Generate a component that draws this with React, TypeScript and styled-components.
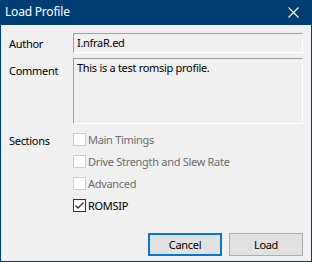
import React from "react";
import styled, { createGlobalStyle } from "styled-components";

const Global = createGlobalStyle`
  html, body { margin: 0; padding: 0; background: #f0f0f0; }
  body { font-family: "Noto Sans", "Open Sans", sans-serif; font-size: 11px; letter-spacing: -0.3px; }
`;

const Window = styled.div`
  width: 312px;
  height: 262px;
  box-sizing: border-box;
  border: 1px solid #003e73;
  border-top: none;
  display: flex;
  flex-direction: column;
  background: #f0f0f0;
`;

const TitleBar = styled.div`
  height: 25px;
  margin: 0 -1px;
  background: #003e73;
  color: #ffffff;
  display: flex;
  align-items: center;
  justify-content: space-between;
  padding: 0 0 0 5px;
  font-size: 12px;
  letter-spacing: -0.2px;
`;

const Title = styled.span`
  line-height: 16px;
  margin-top: -1px;
`;

const CloseBtn = styled.div`
  width: 46px;
  height: 25px;
  display: flex;
  align-items: center;
  justify-content: center;
  padding-left: 8px;
  box-sizing: border-box;
`;

const Body = styled.div`
  flex: 1;
  padding: 8px 8px 5px 8px;
  display: grid;
  grid-template-columns: 64px 1fr;
  grid-template-rows: 20px 66px auto 1fr;
  row-gap: 5px;
  color: #000;
`;

const Label = styled.div<{ $top?: number }>`
  padding-top: ${(p) => p.$top ?? 4}px;
  line-height: 14px;
`;

const Field = styled.div`
  box-sizing: border-box;
  border: 1px solid;
  border-color: #a0a0a0 #ffffff #ffffff #a0a0a0;
  background: #f0f0f0;
  padding: 2px 3px;
  line-height: 14px;
`;

const Checks = styled.div`
  display: flex;
  flex-direction: column;
  gap: 9px;
  padding-top: 4px;
`;

const CheckRow = styled.label<{ $disabled?: boolean }>`
  display: flex;
  align-items: center;
  gap: 2px;
  height: 13px;
  color: ${(p) => (p.$disabled ? "#6d6d6d" : "#000")};
  line-height: 13px;
`;

const Box = styled.span<{ $disabled?: boolean }>`
  width: 13px;
  height: 13px;
  box-sizing: border-box;
  border: 1px solid ${(p) => (p.$disabled ? "#cccccc" : "#333333")};
  background: #ffffff;
  display: flex;
  align-items: center;
  justify-content: center;
  flex: none;
`;

const Buttons = styled.div`
  grid-column: 1 / span 2;
  align-self: end;
  display: flex;
  justify-content: flex-end;
  gap: 7px;
`;

const Button = styled.div<{ $focused?: boolean }>`
  width: 74px;
  height: 23px;
  box-sizing: border-box;
  border: ${(p) => (p.$focused ? "2px solid #0078d7" : "1px solid #adadad")};
  background: #e1e1e1;
  display: flex;
  align-items: center;
  justify-content: center;
  line-height: 14px;
`;

const Check = ({ label, checked, disabled }: { label: string; checked?: boolean; disabled?: boolean }) => (
  <CheckRow $disabled={disabled}>
    <Box $disabled={disabled}>
      {checked && (
        <svg width="11" height="11" viewBox="0 0 11 11">
          <path d="M1.5 5.5 L4 8 L9.5 2.5" stroke="#333" strokeWidth="1.3" fill="none" />
        </svg>
      )}
    </Box>
    <span>{label}</span>
  </CheckRow>
);

export default function App() {
  return (
    <>
      <Global />
      <Window>
        <TitleBar>
          <Title>Load Profile</Title>
          <CloseBtn>
            <svg width="11" height="11" viewBox="0 0 11 11">
              <path d="M0.5 0.5 L10.5 10.5 M10.5 0.5 L0.5 10.5" stroke="#fff" strokeWidth="1.1" />
            </svg>
          </CloseBtn>
        </TitleBar>
        <Body>
          <Label>Author</Label>
          <Field>I.nfraR.ed</Field>
          <Label $top={6}>Comment</Label>
          <Field>This is a test romsip profile.</Field>
          <Label $top={5}>Sections</Label>
          <Checks>
            <Check label="Main Timings" disabled />
            <Check label="Drive Strength and Slew Rate" disabled />
            <Check label="Advanced" disabled />
            <Check label="ROMSIP" checked />
          </Checks>
          <Buttons>
            <Button $focused>Cancel</Button>
            <Button>Load</Button>
          </Buttons>
        </Body>
      </Window>
    </>
  );
}
